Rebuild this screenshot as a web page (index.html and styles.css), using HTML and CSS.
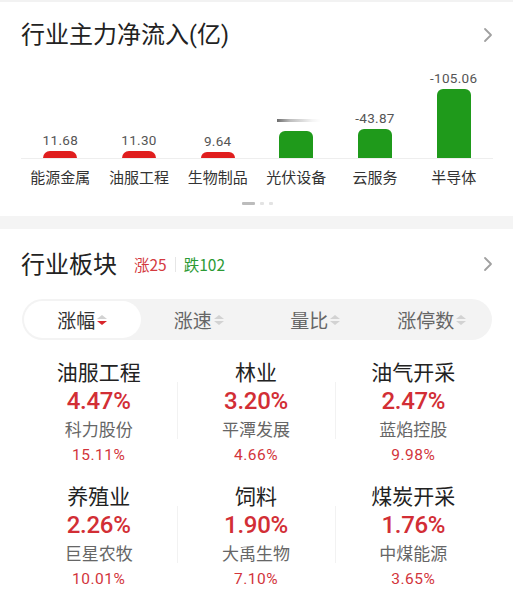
FILE: index.html
```html
<!DOCTYPE html>
<html lang="zh-CN">
<head>
<meta charset="utf-8">
<link rel="stylesheet" href="styles.css">
</head>
<body>
<div class="topline"></div>
<section class="card">
  <div class="head">
    <h2 class="title">行业主力净流入<span class="paren">(</span>亿<span class="paren">)</span></h2>
    <svg class="chev" viewBox="0 0 10 16" width="10" height="16"><path d="M2 2 L8 8 L2 14" fill="none" stroke="#a0a0a0" stroke-width="1.8" stroke-linecap="round" stroke-linejoin="round"/></svg>
  </div>
  <div class="chart">
    <div class="col"><span class="val">11.68</span><span class="bar red" style="height:7px"></span></div>
    <div class="col"><span class="val">11.30</span><span class="bar red" style="height:7px"></span></div>
    <div class="col"><span class="val">9.64</span><span class="bar red" style="height:6px"></span></div>
    <div class="col"><span class="val blur"><i></i></span><span class="bar green" style="height:27px"></span></div>
    <div class="col"><span class="val">-43.87</span><span class="bar green" style="height:29px"></span></div>
    <div class="col"><span class="val">-105.06</span><span class="bar green" style="height:69px"></span></div>
  </div>
  <div class="cats">
    <span>能源金属</span><span>油服工程</span><span>生物制品</span><span>光伏设备</span><span>云服务</span><span>半导体</span>
  </div>
  <div class="dots"><i class="on"></i><i></i><i></i></div>
</section>
<div class="gap"></div>
<section class="card">
  <div class="head head2">
    <div class="left">
      <h2 class="title">行业板块</h2>
      <span class="up">涨25</span><span class="sep"></span><span class="down">跌102</span>
    </div>
    <svg class="chev" viewBox="0 0 10 16" width="10" height="16"><path d="M2 2 L8 8 L2 14" fill="none" stroke="#a0a0a0" stroke-width="1.8" stroke-linecap="round" stroke-linejoin="round"/></svg>
  </div>
  <div class="tabs">
    <div class="tab active">涨幅<span class="sort"><i class="tu"></i><i class="td hot"></i></span></div>
    <div class="tab">涨速<span class="sort"><i class="tu"></i><i class="td"></i></span></div>
    <div class="tab">量比<span class="sort"><i class="tu"></i><i class="td"></i></span></div>
    <div class="tab">涨停数<span class="sort"><i class="tu"></i><i class="td"></i></span></div>
  </div>
  <div class="grid">
    <div class="cell"><div class="name">油服工程</div><div class="pct">4.47%</div><div class="stock">科力股份</div><div class="spct">15.11%</div></div>
    <div class="cell div"><div class="name">林业</div><div class="pct">3.20%</div><div class="stock">平潭发展</div><div class="spct">4.66%</div></div>
    <div class="cell div"><div class="name">油气开采</div><div class="pct">2.47%</div><div class="stock">蓝焰控股</div><div class="spct">9.98%</div></div>
    <div class="cell"><div class="name">养殖业</div><div class="pct">2.26%</div><div class="stock">巨星农牧</div><div class="spct">10.01%</div></div>
    <div class="cell div"><div class="name">饲料</div><div class="pct">1.90%</div><div class="stock">大禹生物</div><div class="spct">7.10%</div></div>
    <div class="cell div"><div class="name">煤炭开采</div><div class="pct">1.76%</div><div class="stock">中煤能源</div><div class="spct">3.65%</div></div>
  </div>
</section>
<div class="gap bottom"></div>
</body>
</html>
```
FILE: styles.css
```css
* { box-sizing: border-box; }
html, body { margin: 0; padding: 0; }
body {
  width: 513px;
  height: 601px;
  overflow: hidden;
  background: #fff;
  font-family: "Noto Sans CJK SC", "Noto Sans", sans-serif;
  color: #222;
}
.topline { height: 2px; background: #f2f2f2; }
.card { background: #fff; }
.head {
  height: 66px;
  display: flex;
  align-items: center;
  justify-content: space-between;
  padding: 0 20px 0 21px;
}
.head2 { height: 70px; }
.title {
  margin: 0;
  font-size: 24px;
  line-height: 30px;
  font-weight: 400;
  color: #222;
  margin-top: -2px;
}
.paren { font-family: "Roboto", sans-serif; font-size: 23px; }
.chev { display: block; }
.chart {
  height: 91px;
  margin: 0 20px 0 21px;
  display: grid;
  grid-template-columns: repeat(6, 1fr);
  border-bottom: 1px solid #eeeeee;
}
.col {
  display: flex;
  flex-direction: column;
  justify-content: flex-end;
  align-items: center;
}
.val {
  font-family: "Roboto", "DejaVu Sans", sans-serif;
  font-size: 13.5px;
  line-height: 16px;
  color: #555;
  margin-bottom: 3px;
  letter-spacing: 0.3px;
}
.val.blur { height: 16px; display: flex; align-items: center; }
.val.blur i {
  display: block;
  width: 44px;
  height: 3px;
  margin-left: 6px;
  background: linear-gradient(to right, #6e6e6e 0%, #bdbdbd 30%, rgba(220,220,220,0.3) 80%, rgba(255,255,255,0) 100%);
}
.bar { width: 34px; display: block; border-radius: 6px 6px 0 0; }
.bar.red { background: #e01e1e; border-radius: 8px 8px 0 0; }
.bar.green { background: #1f9a1b; }
.cats {
  margin: 8px 20px 0 21px;
  display: grid;
  grid-template-columns: repeat(6, 1fr);
  text-align: center;
  font-size: 15px;
  line-height: 20px;
  color: #333;
}
.dots {
  margin-top: 15px;
  height: 3px;
  display: flex;
  justify-content: center;
  gap: 5px;
  padding-left: 2px;
}
.dots i { display: block; width: 4px; height: 3px; background: #e3e3e3; border-radius: 1px; }
.dots i.on { width: 13px; background: #bcbcbc; }
.gap { height: 13px; background: #f4f4f4; margin-top: 11px; }
.gap.bottom { margin-top: 0; height: 10px; }
.left { display: flex; align-items: center; }
.up, .down {
  font-size: 15.5px;
  font-family: "Noto Sans CJK SC", sans-serif;
}
.up { color: #d43a40; margin-left: 17px; }
.down { color: #2c9a35; }
.sep { width: 1px; height: 15px; background: #e6e6e6; margin: 0 8px; }
.tabs {
  margin: 0 21px 0 22px;
  height: 41px;
  background: #f3f3f3;
  border-radius: 21px;
  padding: 2px;
  display: grid;
  grid-template-columns: repeat(4, 1fr);
}
.tab {
  display: flex;
  align-items: center;
  justify-content: center;
  font-size: 19px;
  color: #666;
  border-radius: 19px;
}
.tab.active { background: #fff; color: #333; }
.sort {
  display: inline-flex;
  flex-direction: column;
  gap: 2px;
  margin-left: 2px;
  margin-top: 1px;
}
.sort i { display: block; width: 0; height: 0; border-left: 5px solid transparent; border-right: 5px solid transparent; }
.sort .tu { border-bottom: 4px solid #d2d2d2; }
.sort .td { border-top: 4px solid #d2d2d2; }
.sort .td.hot { border-top-color: #d8252b; }
.grid {
  margin: 17px 21px 0 20px;
  padding-bottom: 8px;
  display: grid;
  grid-template-columns: repeat(3, 1fr);
  row-gap: 12px;
}
.cell {
  position: relative;
  display: flex;
  flex-direction: column;
  align-items: center;
  text-align: center;
}
.cell.div::before {
  content: "";
  position: absolute;
  left: 0;
  top: 25px;
  height: 57px;
  width: 1px;
  background: #f2f2f2;
}
.name { font-size: 21px; line-height: 28px; color: #222; }
.pct {
  font-family: "Roboto", sans-serif;
  font-size: 24px;
  font-weight: 500;
  line-height: 30px;
  color: #d22e35;
  letter-spacing: -0.3px;
  margin-top: 1px;
}
.stock { font-size: 17px; line-height: 26px; color: #666; }
.spct {
  font-family: "Roboto", sans-serif;
  font-size: 15.5px;
  line-height: 27px;
  color: #d2343b;
  letter-spacing: 0.5px;
}
```
